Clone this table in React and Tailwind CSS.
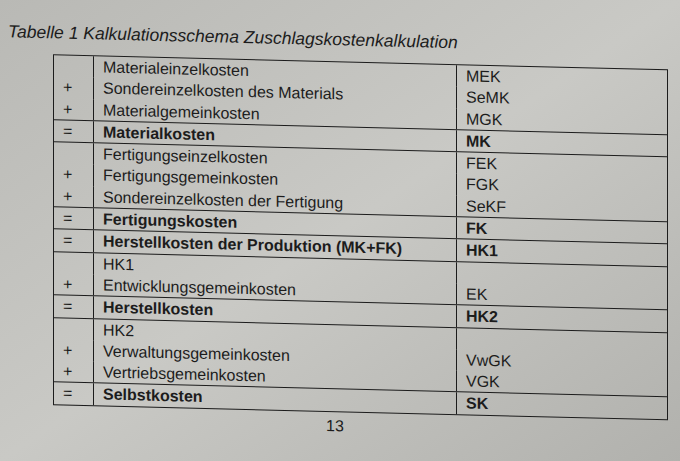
import React from "react";

const groups = [
  [
    ["", "Materialeinzelkosten", "MEK"],
    ["+", "Sondereinzelkosten des Materials", "SeMK"],
    ["+", "Materialgemeinkosten", "MGK"],
  ],
  [["=", "Materialkosten", "MK", true]],
  [
    ["", "Fertigungseinzelkosten", "FEK"],
    ["+", "Fertigungsgemeinkosten", "FGK"],
    ["+", "Sondereinzelkosten der Fertigung", "SeKF"],
  ],
  [["=", "Fertigungskosten", "FK", true]],
  [["=", "Herstellkosten der Produktion (MK+FK)", "HK1", true]],
  [
    ["", "HK1", ""],
    ["+", "Entwicklungsgemeinkosten", "EK"],
  ],
  [["=", "Herstellkosten", "HK2", true]],
  [
    ["", "HK2", ""],
    ["+", "Verwaltungsgemeinkosten", "VwGK"],
    ["+", "Vertriebsgemeinkosten", "VGK"],
  ],
  [["=", "Selbstkosten", "SK", true]],
];

const Row = ({ row }) => {
  const [sign, label, abbr, bold] = row;
  const weight = bold ? "font-bold" : "font-normal";
  return (
    <div className="grid grid-cols-[40px_363px_1fr] h-[21.3px] leading-[21px]">
      <div className="border-r-[1.5px] border-[#1c1c1c] pl-[9px]">{sign}</div>
      <div className={`border-r-[1.5px] border-[#1c1c1c] pl-[9px] whitespace-nowrap ${weight}`}>{label}</div>
      <div className={`pl-[9px] ${weight}`}>{abbr}</div>
    </div>
  );
};

const App = () => {
  return (
    <div className="w-[680px] h-[461px] overflow-hidden bg-linear-to-br from-[#b9b9b5] via-[#c9c9c5] to-[#b1b1ad] text-[#1c1c1c] font-['Liberation_Sans',Arial,sans-serif]">
      <div className="skew-y-[1.4deg] origin-top-left">
        <div className="pt-[21px] pl-[8px] text-[17.5px] leading-[20px] italic">
          Tabelle 1 Kalkulationsschema Zuschlagskostenkalkulation
        </div>
        <div className="mt-[12px] ml-[53px] w-[615px] border-[1.5px] border-[#1c1c1c] text-[16px]">
          {groups.map((g, i) => (
            <div key={i} className={i < groups.length - 1 ? "border-b-[1.5px] border-[#1c1c1c]" : ""}>
              {g.map((r, j) => (
                <Row key={j} row={r} />
              ))}
            </div>
          ))}
        </div>
        <div className="mt-[2px] ml-[326px] text-[16px]">13</div>
      </div>
    </div>
  );
};

export default App;
